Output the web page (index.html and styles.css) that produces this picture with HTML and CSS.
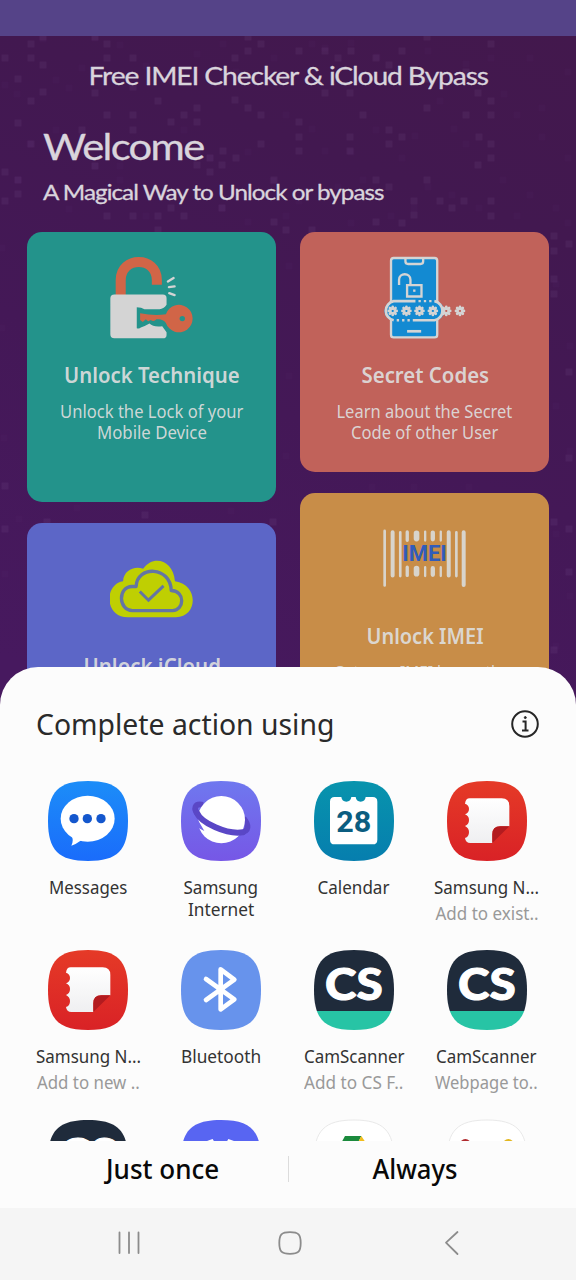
FILE: index.html
```html
<!DOCTYPE html>
<html lang="en">
<head>
<meta charset="utf-8">
<title>Free IMEI Checker &amp; iCloud Bypass</title>
<link rel="stylesheet" href="styles.css">
</head>
<body>
<svg class="defs" width="0" height="0" aria-hidden="true">
  <defs>
    <linearGradient id="g-msg" x1="0" y1="0" x2="0" y2="1"><stop offset="0" stop-color="#1c8df8"/><stop offset="1" stop-color="#1a6cfb"/></linearGradient>
    <linearGradient id="g-net" x1="0" y1="0" x2="0" y2="1"><stop offset="0" stop-color="#6f78ef"/><stop offset="1" stop-color="#7657e6"/></linearGradient>
    <linearGradient id="g-cal" x1="0" y1="0" x2="0" y2="1"><stop offset="0" stop-color="#0894ad"/><stop offset="1" stop-color="#067eae"/></linearGradient>
    <linearGradient id="g-note" x1="0" y1="0" x2="0" y2="1"><stop offset="0" stop-color="#e53a27"/><stop offset="1" stop-color="#d92226"/></linearGradient>
    <linearGradient id="g-page" x1="0" y1="0" x2="0" y2="1"><stop offset="0" stop-color="#fff"/><stop offset="1" stop-color="#efeff1"/></linearGradient>
    <path id="sq" d="M120 0C208 0 240 32 240 120S208 240 120 240 0 208 0 120 32 0 120 0Z"/>
    <clipPath id="sq-clip"><use href="#sq"/></clipPath>
    <symbol id="notes" viewBox="0 0 240 240">
      <use href="#sq" fill="url(#g-note)"/>
      <path fill="url(#g-page)" d="M68 52H164Q187 52 187 75V136H160Q136 136 136 160V186H70Q56 186 54 171Q66 168 66 153Q66 141 54 135Q66 131 66 117Q66 105 54 100Q66 96 66 84Q66 72 54 68Q56 52 68 52Z"/>
      <path fill="#b31b1f" d="M136 186V160Q136 136 160 136H187Z"/>
    </symbol>
    <symbol id="camscanner" viewBox="0 0 240 240">
      <g clip-path="url(#sq-clip)"><path fill="#1f2b3b" d="M0 0H240V183H0Z"/><path fill="#27c4a5" d="M0 183H240V240H0Z"/></g>
      <text x="33" y="151" textLength="173" lengthAdjust="spacingAndGlyphs" font-family="Lato, sans-serif" font-weight="900" font-size="130" fill="#fff" stroke="#fff" stroke-width="3">CS</text>
    </symbol>
    <symbol id="star" viewBox="-18 -18 36 36">
      <g stroke="#d4d4d4" stroke-width="8" stroke-linecap="round"><path d="M0 -12V-7M0 12V7M-12 0H-7M12 0H7M-8.500 -8.500L-5 -5M8.500 8.500L5 5M-8.500 8.500L-5 5M8.500 -8.500L5 -5"/></g>
    </symbol>
  </defs>
</svg>

<div class="screen">
  <div class="status"></div>
  <main class="app">
    <svg class="pattern" viewBox="0 0 576 680" aria-hidden="true">
      <path class="dots-faint" d="M43 3h0M95 2h0M5 49h0M17 58h0M56 44h0M69 52h0M82 32h0M120 9h0M146 30h0M172 45h0M197 18h0M223 8h0M236 36h0M274 22h0M312 8h0M325 12h0M351 7h0M377 21h0M389 43h0M415 36h0M428 15h0M440 65h0M466 28h0M491 22h0M504 58h0M530 22h0M542 72h0M568 36h0M30 108h0M56 94h0M82 101h0M145 109h0M184 94h0M210 122h0M248 116h0M286 79h0M312 93h0M325 115h0M351 116h0M376 94h0M402 122h0M415 100h0M454 93h0M466 108h0M517 79h0M542 101h0M568 122h0M95 130h0M120 130h0M18 144h0M56 151h0M120 144h0M172 159h0M222 172h0M273 145h0M299 165h0M338 151h0M363 144h0M414 172h0M428 151h0M452 159h0M479 172h0M503 144h0M530 159h0M556 172h0M69 173h0M146 180h0M248 186h0M286 180h0M351 187h0M391 180h0M517 180h0M568 187h0M2 212h0M2 292h0M4 402h0M19 483h0M5 538h0M289 230h0M289 340h0M286 420h0M556 248h0M570 310h0M556 370h0M570 415h0M556 498h0M570 560h0M556 610h0M77 472h0M231 475h0M372 451h0M414 451h0M469 451h0"/>
      <path class="dots" d="M43 1h0M95 1h0M31 8h0M31 22h0M43 29h0M5 22h0M107 8h0M107 22h0M18 43h0M133 22h0M248 1h0M248 15h0M261 8h0M235 22h0M299 15h0M325 15h0M351 15h0M338 22h0M376 22h0M402 15h0M389 29h0M427 1h0M491 8h0M466 36h0M43 56h0M31 65h0M95 57h0M133 51h0M158 65h0M107 79h0M133 79h0M18 87h0M184 79h0M171 86h0M197 72h0M197 86h0M235 64h0M248 72h0M261 79h0M133 94h0M82 94h0M31 108h0M286 43h0M299 86h0M299 101h0M299 115h0M325 57h0M350 57h0M363 79h0M350 101h0M350 115h0M261 108h0M223 115h0M197 115h0M210 122h0M222 129h0M236 122h0M197 129h0M210 136h0M389 94h0M402 101h0M389 108h0M427 72h0M427 43h0M478 57h0M491 65h0M466 79h0M491 79h0M479 101h0M491 108h0M491 122h0M478 129h0M5 136h0M18 144h0M18 158h0M5 165h0M95 130h0M107 180h0M133 180h0M158 180h0M171 172h0M184 180h0M222 172h0M274 144h0M274 186h0M286 194h0M312 194h0M158 194h0M376 144h0M389 151h0M414 165h0M427 144h0M440 165h0M452 172h0M464 165h0M491 165h0M491 180h0M414 179h0M402 187h0M376 186h0M554 200h0M569 208h0M554 215h0M554 243h0M554 258h0M569 336h0M569 422h0M5 450h0M5 493h0M145 479h0M47 486h0M273 486h0M554 486h0M569 493h0M569 536h0M554 614h0"/>
    </svg>
    <header class="head">
      <h1 class="app-name"><span data-w="399">Free IMEI Checker &amp; iCloud Bypass</span></h1>
      <h2 class="welcome"><span class="from-left" data-w="161">Welcome</span></h2>
      <p class="tagline"><span class="from-left" data-w="340">A Magical Way to Unlock or bypass</span></p>
    </header>
    <div class="cards">
      <div class="column">
        <section class="card teal">
          <svg class="card-icon" viewBox="272 92 248 248">
            <path fill="none" stroke="#d16547" stroke-width="30" d="M304 210V164C304 92 412 92 412 164V178"/>
            <path fill="#d4d4d4" d="M285 207H430Q441 207 441 218V238Q432 251 420 251H375Q366 245 352 245V308Q360 310 364 306Q380 300 390 294Q402 306 428 302L441 320V328Q441 338 430 338H285Q273 338 273 326V219Q273 207 285 207Z"/>
            <path fill="#d16547" d="M362 263Q405 272 439 266A41 41 0 1 1 439 292Q430 279 411 281Q402 290 394 283L386 287 379 281 370 289 362 283Z"/>
            <circle cx="488" cy="279" r="8" fill="#23938b"/>
            <path stroke="#d4d4d4" stroke-width="7" stroke-linecap="round" d="M445 168L462 158M448 185L465 183M449 203L465 209"/>
          </svg>
          <h3><span data-w="176">Unlock Technique</span></h3>
          <p><span data-w="183">Unlock the Lock of your</span><span data-w="110">Mobile Device</span></p>
        </section>
        <section class="card indigo">
          <svg class="card-icon" viewBox="331 201 248 248">
            <path fill="#bfcf02" d="M384 411C314 411 313 312 370 303C372 270 405 256 430 266C460 222 521 240 525 303C597 312 594 411 528 411Z"/>
            <path fill="none" stroke="#6475a4" stroke-width="10" stroke-linejoin="round" d="M398 391C355 389 354 320 397 319H409C412 255 512 258 514 331C557 333 553 390 518 391Z"/>
            <path fill="none" stroke="#6475a4" stroke-width="9" d="M420 334L446 360L491 317"/>
          </svg>
          <h3><span data-w="137">Unlock iCloud</span></h3>
        </section>
      </div>
      <div class="column">
        <section class="card coral">
          <svg class="card-icon" viewBox="279 93 248 248">
            <rect x="303" y="99" width="138" height="237" rx="8" fill="#138ad2" stroke="#d4d4d4" stroke-width="7"/>
            <path fill="none" stroke="#d4d4d4" stroke-width="7" d="M346 100V109Q346 117 354 117H391Q399 117 399 109V100"/>
            <path fill="none" stroke="#d4d4d4" stroke-width="7" d="M327 180V164C327 142 361 142 361 164V180M351 180H394V214H351Z"/>
            <rect x="369" y="193" width="7" height="7" fill="#d4d4d4"/>
            <rect x="283" y="228" width="179" height="58" rx="29" fill="#138ad2"/>
            <path fill="none" stroke="#d4d4d4" stroke-width="8" d="M376 228H311A29 29 0 0 0 311 285M368 285H433A29 29 0 0 0 433 228"/>
            <path stroke="#d4d4d4" stroke-width="7" stroke-dasharray="7 9" d="M385 228H434M320 285H362"/>
            <path stroke="#d4d4d4" stroke-width="8" d="M351 318H393"/>
            <use href="#star" x="290" y="239" width="36" height="36"/><use href="#star" x="331" y="239" width="36" height="36"/><use href="#star" x="370" y="239" width="36" height="36"/><use href="#star" x="410" y="239" width="36" height="36"/><use href="#star" x="450" y="239" width="36" height="36"/><use href="#star" x="491" y="239" width="36" height="36"/>
          </svg>
          <h3><span data-w="128">Secret Codes</span></h3>
          <p><span data-w="176">Learn about the Secret</span><span data-w="147">Code of other User</span></p>
        </section>
        <section class="card amber">
          <svg class="card-icon" viewBox="279 110 250 250">
            <g stroke="#d8d4cc" stroke-linecap="round">
              <path stroke-width="8" d="M284 152V316M331 156V288M500 156V288"/>
              <path stroke-width="12" d="M308 156V286M477 156V286M522 156V315"/>
              <path stroke-width="10" d="M352 155V180M352 261V286"/>
              <path stroke-width="17" d="M380 159V175M380 265V281"/>
              <path stroke-width="13" d="M429 157V177M429 264V284"/>
              <path stroke-width="7" d="M406 154V181M453 154V181M406 261V288M453 261V288"/>
            </g>
            <text x="337" y="244" textLength="134" lengthAdjust="spacingAndGlyphs" font-family="Roboto, sans-serif" font-weight="700" font-size="65" fill="#315cbb">IMEI</text>
          </svg>
          <h3><span data-w="117">Unlock IMEI</span></h3>
          <p><span data-w="182">Get your IMEI by another</span></p>
        </section>
      </div>
    </div>
  </main>

  <section class="sheet">
    <header class="sheet-head">
      <h2><span class="from-left" data-w="298">Complete action using</span></h2>
      <svg class="info" viewBox="0 0 28 28" fill="none" stroke="#262626" stroke-width="2"><circle cx="14" cy="14" r="12.800"/><path d="M11.500 11.500H14.600V20.500M11 20.500H17.500"/><circle cx="14.300" cy="7.600" r="1" fill="#262626" stroke-width="1"/></svg>
    </header>
    <div class="apps">
      <div class="item">
        <svg class="icon" viewBox="0 0 240 240"><use href="#sq" fill="url(#g-msg)"/><ellipse cx="119" cy="113" rx="81" ry="69" fill="#fff"/><path fill="#fff" d="M68 158Q79 175 70 194Q84 190 100 178Z"/><g fill="#1457cd"><circle cx="78" cy="113" r="14"/><circle cx="118" cy="113" r="14"/><circle cx="159" cy="113" r="14"/></g></svg>
        <div class="name"><span data-w="78">Messages</span></div>
      </div>
      <div class="item">
        <svg class="icon" viewBox="0 0 240 240"><use href="#sq" fill="url(#g-net)"/><path fill="none" stroke="#5a47c6" stroke-width="17" d="M66 71C40 66 36 84 52 102M176 154C208 152 203 130 188 112"/><circle cx="121" cy="116" r="71" fill="#fff"/><path fill="#7266ea" d="M46 95L54 122L70 150L51 140L44 110Z"/><path fill="none" stroke="#5a47c6" stroke-width="18" stroke-linecap="round" d="M47 94C60 126 138 162 186 154"/></svg>
        <div class="name"><span data-w="75">Samsung</span><span data-w="66">Internet</span></div>
      </div>
      <div class="item">
        <svg class="icon" viewBox="0 0 240 240"><use href="#sq" fill="url(#g-cal)"/><path fill="#fff" d="M62 48H82Q84 62 97 62T112 48H125Q127 62 140 62T155 48H176Q190 48 190 62V176Q190 190 176 190H62Q48 190 48 176V62Q48 48 62 48Z"/><text x="67" y="154" textLength="105" lengthAdjust="spacingAndGlyphs" font-family="Roboto, sans-serif" font-weight="700" font-size="88" fill="#0b5d80">28</text></svg>
        <div class="name"><span data-w="72">Calendar</span></div>
      </div>
      <div class="item">
        <svg class="icon"><use href="#notes"/></svg>
        <div class="name"><span data-w="105">Samsung N...</span></div>
        <div class="sub"><span data-w="103">Add to exist..</span></div>
      </div>
      <div class="item">
        <svg class="icon"><use href="#notes"/></svg>
        <div class="name"><span data-w="105">Samsung N...</span></div>
        <div class="sub"><span data-w="103">Add to new ..</span></div>
      </div>
      <div class="item">
        <svg class="icon" viewBox="0 0 240 240"><use href="#sq" fill="#6793ec"/><path fill="none" stroke="#fff" stroke-width="14" stroke-linecap="round" stroke-linejoin="round" d="M75 87L160 148L119 178V58L160 89L75 150"/></svg>
        <div class="name"><span data-w="80">Bluetooth</span></div>
      </div>
      <div class="item">
        <svg class="icon"><use href="#camscanner"/></svg>
        <div class="name"><span data-w="101">CamScanner</span></div>
        <div class="sub"><span data-w="99">Add to CS F..</span></div>
      </div>
      <div class="item">
        <svg class="icon"><use href="#camscanner"/></svg>
        <div class="name"><span data-w="101">CamScanner</span></div>
        <div class="sub"><span data-w="103">Webpage to..</span></div>
      </div>
      <div class="item"><svg class="icon"><use href="#camscanner"/></svg></div>
      <div class="item"><svg class="icon" viewBox="0 0 240 240"><use href="#sq" fill="#5865f2"/><path fill="#fff" d="M64 72Q76 62 95 57L99 64H138L142 57Q160 62 176 72V150H64Z"/></svg></div>
      <div class="item"><svg class="icon" viewBox="0 0 240 240"><use href="#sq" fill="#fff" stroke="#e9e9e9" stroke-width="3"/><path fill="#1b8a3d" d="M93 48H142L130 72H80Z"/><path fill="#f2bd1c" d="M142 48L158 72H130Z"/></svg></div>
      <div class="item"><svg class="icon" viewBox="0 0 240 240"><use href="#sq" fill="#fff" stroke="#e9e9e9" stroke-width="3"/><circle cx="55" cy="74" r="17" fill="#b02a2e"/><circle cx="184" cy="74" r="17" fill="#e3b71f"/></svg></div>
    </div>
    <div class="actions">
      <div class="action once"><span data-w="113">Just once</span></div>
      <div class="divider"></div>
      <div class="action always"><span data-w="85">Always</span></div>
    </div>
  </section>

  <nav class="nav">
    <svg viewBox="0 0 576 72" fill="none" stroke="#8c8c8c" stroke-width="1.800" stroke-linecap="round" stroke-linejoin="round"><path d="M119.500 24.500V45M129 24.500V45M138.500 24.500V45"/><path d="M290 24.200C298.500 24.200 300.700 26.500 300.700 35S298.500 45.800 290 45.800 279.300 43.500 279.300 35 281.500 24.200 290 24.200Z"/><path d="M457.500 24L446 34.700L457.500 46"/></svg>
  </nav>
</div>
<script src="fit.js"></script>
</body>
</html>
```
FILE: styles.css
```css
* { box-sizing: border-box; }
body { margin: 0; width: 576px; height: 1280px; overflow: hidden; font-family: "Noto Sans", sans-serif; }
h1, h2, h3, p { margin: 0; font-weight: 400; }
svg { display: block; }
.defs { position: absolute; }
span[data-w] { display: inline-block; white-space: nowrap; transform-origin: center; }
span.from-left { transform-origin: left center; }

.screen { position: relative; height: 1280px; display: flex; flex-direction: column; overflow: hidden; }
.status { height: 36px; flex: none; background: #554388; }
.app { position: relative; flex: 1; min-height: 0; overflow: hidden; background: linear-gradient(200deg, #43184d 0, #421850 15%, #441857 35%, #47195f 60%); }
.pattern { position: absolute; top: 0; left: 0; width: 576px; height: 680px; }
.pattern path { fill: none; stroke: #b48cc8; stroke-width: 7; stroke-linecap: square; }
.pattern .dots { stroke-opacity: .08; }
.pattern .dots-faint { stroke-opacity: .025; }
.head { position: relative; height: 196px; padding-top: 24px; font-family: Lato, "Open Sans", sans-serif; color: #d9d4dc; -webkit-text-stroke: .3px #d9d4dc; }
.app-name { font-size: 25.500px; line-height: 30px; letter-spacing: -.04em; text-align: center; }
.welcome { padding: 35px 0 0 43px; font-size: 36px; line-height: 42px; letter-spacing: -.04em; }
.tagline { padding: 12px 0 0 43px; font-size: 21px; line-height: 26px; letter-spacing: -.04em; }

.cards { position: relative; display: grid; grid-template-columns: 249px 249px; gap: 24px; padding: 0 27px; align-items: start; }
.column { display: flex; flex-direction: column; gap: 21px; }
.card { height: 270px; padding-top: 24px; border-radius: 15px; text-align: center; color: rgba(222, 222, 222, .93); }
.teal { background: #23938b; }
.coral { height: 240px; background: #c1625a; }
.indigo { background: #5c66c7; }
.amber { background: #c88d48; }
.card-icon { width: 83px; height: 83px; margin: 0 auto; }
.card h3 { margin-top: 22px; padding-left: 1px; font-size: 21.500px; font-weight: 600; line-height: 28px; }
.card p { margin-top: 12px; display: flex; flex-direction: column; align-items: center; font-size: 17.700px; line-height: 21px; }

.sheet { position: absolute; left: 0; right: 0; bottom: 72px; height: 541px; display: flex; flex-direction: column; border-radius: 38px 38px 0 0; background: #fcfcfc; color: #2a2a2a; }
.sheet-head { display: flex; justify-content: space-between; align-items: center; height: 113.500px; padding: 0 37px 0 36px; }
.sheet-head h2 { font-size: 29.300px; line-height: 40px; }
.info { width: 28px; height: 28px; }
.apps { height: 360.500px; padding-right: 1px; overflow: hidden; display: grid; grid-template-columns: repeat(4, 132.800px); grid-auto-rows: 169.500px; justify-content: center; }
.item { display: flex; flex-direction: column; align-items: center; }
.icon { width: 80px; height: 80px; flex: none; overflow: visible; }
.name { margin-top: 16px; display: flex; flex-direction: column; align-items: center; font-size: 17.300px; line-height: 22px; color: #333; }
.sub { margin-top: 3px; font-size: 17.500px; line-height: 22px; color: #999; }
.actions { flex: 1; display: grid; grid-template-columns: 1fr 1px 1fr; align-items: start; color: #080808; font-size: 26.500px; font-weight: 550; line-height: 36px; text-align: center; }
.action { padding-top: 10px; }
.once { padding-left: 37px; }
.always { padding-right: 34px; }
.divider { width: 1px; height: 26px; margin-top: 15px; background: #dcdcdc; }
.nav { height: 72px; flex: none; background: #f5f5f5; }
.nav svg { width: 576px; height: 72px; }
```
FILE: fit.js
```js
// Condense or widen each label horizontally to its design width.
for (const label of document.querySelectorAll("span[data-w]")) {
  const scale = Number(label.dataset.w) / label.offsetWidth;
  label.style.transform = `scaleX(${scale})`;
}
```
